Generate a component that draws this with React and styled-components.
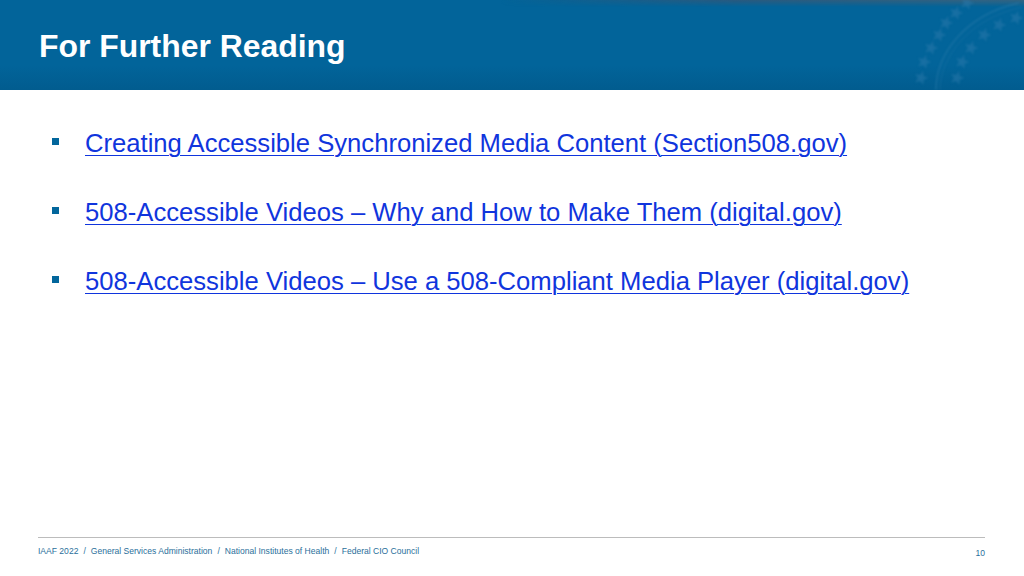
import React from "react";
import styled, { createGlobalStyle } from "styled-components";

const Global = createGlobalStyle`
  html, body { margin: 0; padding: 0; background: #fff; }
  body { font-family: "Liberation Sans", Arial, sans-serif; }
`;

const Slide = styled.div`
  width: 1024px;
  height: 576px;
  display: flex;
  flex-direction: column;
  overflow: hidden;
  background: #fff;
`;

const Header = styled.header`
  position: relative;
  flex: 0 0 90px;
  box-sizing: border-box;
  padding: 4px 0 0 39px;
  display: flex;
  align-items: center;
  overflow: hidden;
  background: linear-gradient(180deg, #02649a 0%, #02649a 72%, #015c8f 100%);
`;

const TopShade = styled.div`
  position: absolute;
  top: 0;
  left: 500px;
  right: 0;
  height: 7px;
  background: linear-gradient(90deg, rgba(80, 80, 90, 0) 0%, rgba(80, 80, 100, 0.5) 45%, rgba(90, 100, 110, 0.55) 100%);
  mask-image: linear-gradient(180deg, #000 0%, transparent 100%);
`;

const Title = styled.h1`
  margin: 0;
  font-size: 31.9px;
  font-weight: 700;
  color: #fff;
  line-height: 1;
`;

const Seal = styled.svg`
  position: absolute;
  top: 0;
  right: 0;
  width: 124px;
  height: 90px;
  filter: blur(0.9px);
`;

const Content = styled.main`
  flex: 1;
  padding: 39px 0 0 52px;
`;

const List = styled.ul`
  list-style: none;
  margin: 0;
  padding: 0;
  display: flex;
  flex-direction: column;
  gap: 40px;
`;

const Item = styled.li`
  display: flex;
  align-items: center;
  height: 29px;
`;

const Bullet = styled.span`
  flex: 0 0 7px;
  width: 7px;
  height: 7px;
  margin: 0 26px 0 0;
  position: relative;
  top: -2px;
  background: #02669c;
`;

const Anchor = styled.a`
  font-size: 25.63px;
  line-height: 29px;
  color: #1035dd;
  text-decoration: underline;
  text-decoration-thickness: 1px;
  text-underline-offset: 3px;
  white-space: nowrap;
`;

const Footer = styled.footer`
  margin: 0 39px 0 38px;
  height: 38px;
  border-top: 1px solid #bcbcbc;
  display: flex;
  justify-content: space-between;
  font-size: 8.55px;
  color: #2a6f9b;
`;

const Crumbs = styled.div`
  padding-top: 8px;
`;

const Sep = styled.span`
  margin: 0 5px;
`;

const PageNo = styled.div`
  padding-top: 10px;
`;

const starPoints = (cx, cy, r) => {
  const pts = [];
  for (let i = 0; i < 10; i++) {
    const a = -Math.PI / 2 + (i * Math.PI) / 5 + 0.3;
    const d = i % 2 ? r * 0.42 : r;
    pts.push(`${(cx + d * Math.cos(a)).toFixed(1)},${(cy + d * Math.sin(a)).toFixed(1)}`);
  }
  return pts.join(" ");
};

const outer = [[97, 78], [100, 62], [107, 48], [115, 35], [122, 23], [132, 13], [143, 3]];
const inner = [[133, 78], [138, 62], [147, 48], [160, 35], [175, 25], [192, 18]];

const links = [
  "Creating Accessible Synchronized Media Content (Section508.gov)",
  "508-Accessible Videos – Why and How to Make Them (digital.gov)",
  "508-Accessible Videos – Use a 508-Compliant Media Player (digital.gov)",
];

const crumbs = ["IAAF 2022", "General Services Administration", "National Institutes of Health", "Federal CIO Council"];

export default function App() {
  return (
    <Slide>
      <Global />
      <Header>
        <TopShade />
        <Title>For Further Reading</Title>
        <Seal viewBox="76 0 124 90" aria-hidden="true">
          <g fill="#2c7bab" opacity="0.5">
            {outer.concat(inner).map(([x, y]) => (
              <polygon key={`${x}-${y}`} points={starPoints(x, y, 7.5)} />
            ))}
          </g>
          <path d="M112 90 C112 55 140 15 195 3" fill="none" stroke="#2c7bab" strokeWidth="1.5" opacity="0.55" />
          <path d="M116 90 C116 58 144 19 198 7" fill="none" stroke="#2c7bab" strokeWidth="1" opacity="0.4" />
        </Seal>
      </Header>
      <Content>
        <List>
          {links.map((t) => (
            <Item key={t}>
              <Bullet />
              <Anchor href="#">{t}</Anchor>
            </Item>
          ))}
        </List>
      </Content>
      <Footer>
        <Crumbs>
          {crumbs.map((c, i) => (
            <React.Fragment key={c}>
              {i > 0 && <Sep>/</Sep>}
              {c}
            </React.Fragment>
          ))}
        </Crumbs>
        <PageNo>10</PageNo>
      </Footer>
    </Slide>
  );
}
